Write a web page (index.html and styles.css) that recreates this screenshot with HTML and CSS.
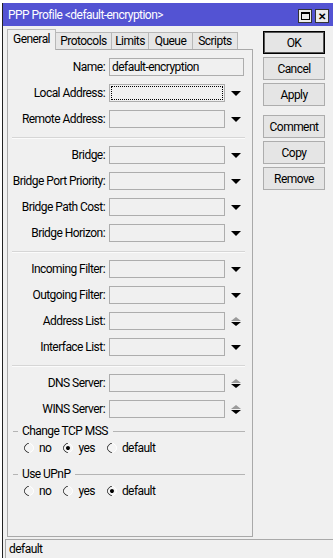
FILE: index.html
```html
<!DOCTYPE html>
<html lang="en-US">
	<head>
		<meta charset="utf-8">
		<title>PPP Profile &lt;default-encryption&gt;</title>
		<link rel="stylesheet" href="styles.css">
	</head>
	<body>
		<div class="window">
			<div class="titlebar">
				<span class="title">PPP Profile &lt;default-encryption&gt;</span>
				<span class="tb-btn max"><span></span></span>
				<span class="tb-btn close">&#x2715;</span>
			</div>
			<div class="content">
				<div class="main">
					<div class="tabs">
						<span class="tab active t-general">General</span>
						<span class="tab t-protocols">Protocols</span>
						<span class="tab t-limits">Limits</span>
						<span class="tab t-queue">Queue</span>
						<span class="tab t-scripts">Scripts</span>
					</div>
					<div class="panel">
						<div class="row">
							<label>Name:</label>
							<span class="field wide">default-encryption</span>
						</div>
						<div class="row">
							<label>Local Address:</label>
							<span class="field focus"></span>
							<span class="drop"></span>
						</div>
						<div class="row">
							<label>Remote Address:</label>
							<span class="field"></span>
							<span class="drop"></span>
						</div>
						<div class="sep"></div>
						<div class="row">
							<label>Bridge:</label>
							<span class="field"></span>
							<span class="drop"></span>
						</div>
						<div class="row">
							<label>Bridge Port Priority:</label>
							<span class="field"></span>
							<span class="drop"></span>
						</div>
						<div class="row">
							<label>Bridge Path Cost:</label>
							<span class="field"></span>
							<span class="drop"></span>
						</div>
						<div class="row">
							<label>Bridge Horizon:</label>
							<span class="field"></span>
							<span class="drop"></span>
						</div>
						<div class="sep"></div>
						<div class="row">
							<label>Incoming Filter:</label>
							<span class="field"></span>
							<span class="drop"></span>
						</div>
						<div class="row">
							<label>Outgoing Filter:</label>
							<span class="field"></span>
							<span class="drop"></span>
						</div>
						<div class="row">
							<label>Address List:</label>
							<span class="field"></span>
							<span class="spin"><i class="up"></i><i class="down"></i></span>
						</div>
						<div class="row">
							<label>Interface List:</label>
							<span class="field"></span>
							<span class="drop"></span>
						</div>
						<div class="sep"></div>
						<div class="row">
							<label>DNS Server:</label>
							<span class="field"></span>
							<span class="spin"><i class="up"></i><i class="down"></i></span>
						</div>
						<div class="row">
							<label>WINS Server:</label>
							<span class="field"></span>
							<span class="spin"><i class="up"></i><i class="down"></i></span>
						</div>

						<div class="group">
							<div class="group-title"><span>Change TCP MSS</span></div>
							<div class="radios">
								<span class="radio"><i></i>no</span>
								<span class="radio checked"><i></i>yes</span>
								<span class="radio"><i></i>default</span>
							</div>
						</div>
						<div class="group">
							<div class="group-title"><span>Use UPnP</span></div>
							<div class="radios">
								<span class="radio"><i></i>no</span>
								<span class="radio"><i></i>yes</span>
								<span class="radio checked"><i></i>default</span>
							</div>
						</div>
					</div>
				</div>
				<div class="actions">
					<button class="default">OK</button>
					<button>Cancel</button>
					<button>Apply</button>
					<button class="gap">Comment</button>
					<button>Copy</button>
					<button>Remove</button>
				</div>
			</div>
			<div class="status">default</div>
		</div>
	</body>
</html>
```

FILE: styles.css
```css
html,
body {
	background: #fff;
	height: 558px;
	margin: 0;
	overflow: hidden;
}
body {
	color: #000;
	font-family: Roboto, "Liberation Sans", sans-serif;
	font-size: 12px;
	letter-spacing: -0.55px;
	white-space: nowrap;
}
.window {
	background: #f0f0f0;
	border-left: 1px solid #222;
	height: 555px;
	margin: 3px 0 0 2px;
	width: 340px;
}
.titlebar {
	align-items: center;
	background: #5353d3;
	box-sizing: border-box;
	color: #fff;
	display: flex;
	height: 23px;
	padding: 0 14px 0 5px;
}
.title {
	flex: 1;
}
.tb-btn {
	align-items: center;
	background: #ececec;
	border: 1px solid #333;
	box-sizing: border-box;
	color: #000;
	display: flex;
	font-size: 10px;
	font-weight: bold;
	height: 14px;
	justify-content: center;
	letter-spacing: 0;
	margin-left: 3px;
	margin-top: 3px;
	width: 14px;
}
.tb-btn.max span {
	border: 1px solid #000;
	border-top-width: 2px;
	height: 5px;
	width: 7px;
}

.content {
	display: flex;
	padding-top: 3px;
}
.main {
	margin-left: 4px;
	width: 246px;
}
.tabs {
	align-items: flex-end;
	display: flex;
	height: 20px;
}
.tab {
	background: #e6e6e6;
	border: 1px solid #b8b8b8;
	border-bottom: none;
	box-sizing: border-box;
	height: 17px;
	line-height: 16px;
	text-align: center;
}
.tab + .tab {
	border-left: none;
}
.tab.active {
	background: #f0f0f0;
	height: 21px;
	line-height: 19px;
	margin-bottom: -1px;
	position: relative;
}
.t-general { width: 49px; }
.t-protocols { width: 56px; }
.t-limits { width: 37px; }
.t-queue { width: 44px; }
.t-scripts { width: 45px; }

.panel {
	border: 1px solid #a9a9a9;
	box-sizing: border-box;
	height: 488px;
	padding-top: 4px;
}
.row {
	align-items: center;
	display: flex;
	height: 26px;
}
.row label {
	text-align: right;
	width: 97px;
}
.field {
	background: #f0f0f0;
	border: 1px solid #adadad;
	box-sizing: border-box;
	height: 18px;
	line-height: 16px;
	margin-left: 4px;
	padding-left: 2px;
	width: 116px;
}
.field.wide {
	width: 135px;
}
.field.focus {
	outline: 1px dotted #000;
	outline-offset: -3px;
}
.drop {
	border-left: 5px solid transparent;
	border-right: 5px solid transparent;
	border-top: 5px solid #000;
	height: 0;
	margin-left: 6px;
	width: 0;
}
.spin {
	display: flex;
	flex-direction: column;
	margin-left: 6px;
}
.spin i {
	border-left: 5px solid transparent;
	border-right: 5px solid transparent;
	height: 0;
	width: 0;
}
.spin .up {
	border-bottom: 4px solid #9a9a9a;
	margin-bottom: 1px;
}
.spin .down {
	border-top: 4px solid #000;
}
.sep {
	border-bottom: 1px solid #fbfbfb;
	border-top: 1px solid #d6d6d6;
	margin: 5px 7px 3px 4px;
}

.group {
	margin-bottom: 9px;
}
.group-title {
	align-items: center;
	display: flex;
	height: 18px;
	margin: 0 7px 0 5px;
}
.group-title::before,
.group-title::after {
	border-top: 1px solid #b4b4b4;
	content: '';
	height: 0;
}
.group-title::before {
	width: 5px;
}
.group-title::after {
	flex: 1;
}
.group-title span {
	margin: 0 5px 0 4px;
}
.radios {
	align-items: center;
	display: flex;
	height: 16px;
	padding-left: 16px;
}
.radio {
	align-items: center;
	display: inline-flex;
	margin-right: 12px;
}
.radio i {
	background: #f4f4f4;
	border: 1.5px solid;
	border-color: #333 #fff #fff #333;
	border-radius: 50%;
	box-sizing: border-box;
	height: 10px;
	margin-right: 5px;
	position: relative;
	transform: rotate(-45deg);
	width: 10px;
}
.radio.checked i::after {
	background: #000;
	border-radius: 50%;
	content: '';
	height: 4px;
	left: 1.5px;
	position: absolute;
	top: 1.5px;
	width: 4px;
}

.actions {
	display: flex;
	flex-direction: column;
	margin-left: 10px;
	padding-top: 2px;
}
button {
	background: #e5e5e5;
	border: 1px solid #adadad;
	color: #000;
	font-family: inherit;
	font-size: 12px;
	height: 23px;
	letter-spacing: -0.55px;
	margin: 0 0 3px;
	padding: 0;
	width: 62px;
}
button.default {
	border-color: #000;
	box-shadow: inset 0 0 0 1px #555;
}
button.gap {
	margin-top: 6px;
}

.status {
	border-left: 1px solid #a9a9a9;
	border-top: 1px solid #a9a9a9;
	box-sizing: border-box;
	height: 19px;
	line-height: 18px;
	margin: 2px 0 0 2px;
	padding-left: 3px;
}
```
